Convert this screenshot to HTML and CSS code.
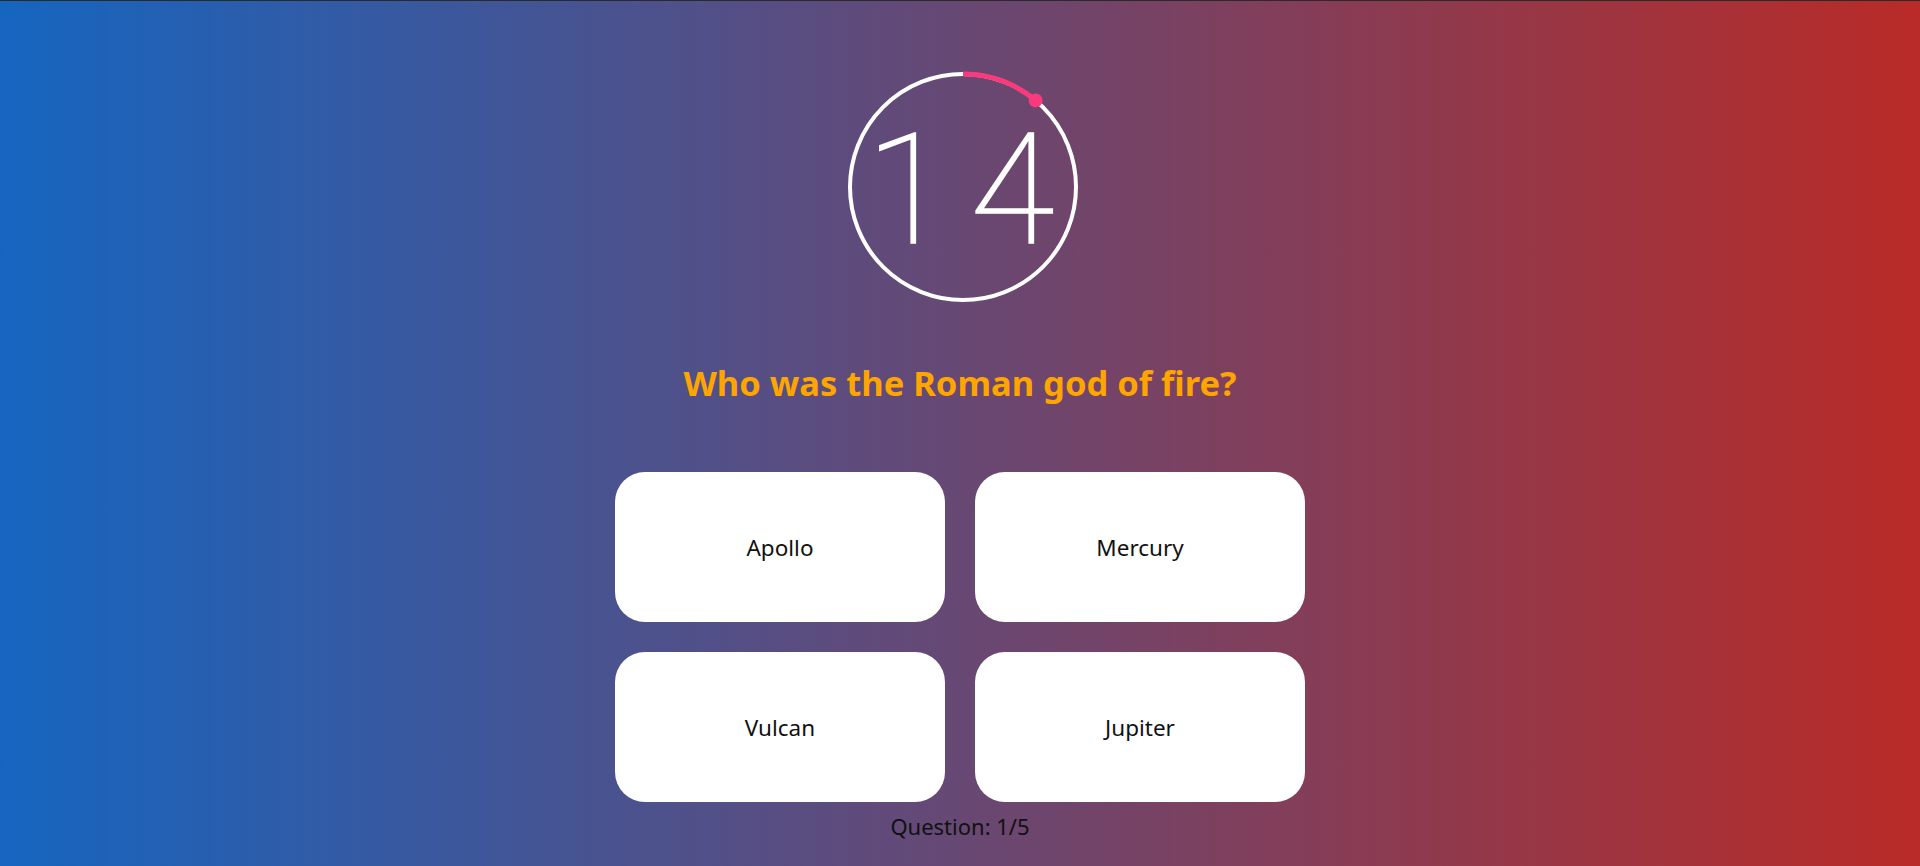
FILE: index.html
```html
<!DOCTYPE html>
<html lang="en">
<head>
<meta charset="utf-8">
<title>Quiz</title>
<link rel="stylesheet" href="styles.css">
</head>
<body>
<main class="quiz">
  <div class="timer">
    <svg class="timer-ring" width="232" height="232" viewBox="0 0 232 232">
      <circle cx="116" cy="116" r="113" fill="none" stroke="#ffffff" stroke-width="4"/>
      <path d="M116 3 A113 113 0 0 1 188.6 29.4" fill="none" stroke="#f93a7d" stroke-width="5"/>
      <circle cx="188.6" cy="29.4" r="7" fill="#f93a7d"/>
    </svg>
    <span class="timer-value">14</span>
  </div>
  <h1 class="question">Who was the Roman god of fire?</h1>
  <div class="answers">
    <button class="answer">Apollo</button>
    <button class="answer">Mercury</button>
    <button class="answer">Vulcan</button>
    <button class="answer">Jupiter</button>
  </div>
  <p class="progress">Question: 1/5</p>
</main>
</body>
</html>
```
FILE: styles.css
```css
html, body {
  margin: 0;
  padding: 0;
  height: 100%;
}
body {
  box-sizing: border-box;
  border-top: 1px solid #2a2a2a;
  background: linear-gradient(to right, #1565c0, #b92b27);
  font-family: "Noto Sans", "Open Sans", sans-serif;
  overflow: hidden;
}
.quiz {
  display: flex;
  flex-direction: column;
  align-items: center;
  padding-top: 70px;
}
.timer {
  display: grid;
  width: 232px;
  height: 232px;
  margin-left: 6px;
}
.timer-ring,
.timer-value {
  grid-area: 1 / 1;
}
.timer-value {
  align-self: center;
  justify-self: center;
  color: #ffffff;
  font-family: "Roboto", "Inter", sans-serif;
  font-weight: 100;
  font-size: 154px;
  line-height: 1;
  letter-spacing: 20px;
  margin-right: -14px;
  margin-top: 8px;
  -webkit-text-stroke: 1.6px #ffffff;
}
.question {
  margin: 56px 0 0;
  color: #ffa500;
  font-size: 34.5px;
  font-weight: 700;
  line-height: 48px;
}
.answers {
  display: grid;
  grid-template-columns: 330px 330px;
  grid-auto-rows: 150px;
  gap: 30px;
  margin-top: 65px;
}
.answer {
  border: none;
  border-radius: 30px;
  background: #ffffff;
  color: #111111;
  font-family: "Noto Sans", "Open Sans", sans-serif;
  font-size: 22.5px;
  cursor: pointer;
}
.progress {
  margin: 9px 0 0;
  color: #111111;
  font-size: 22px;
  line-height: 30px;
}
```
